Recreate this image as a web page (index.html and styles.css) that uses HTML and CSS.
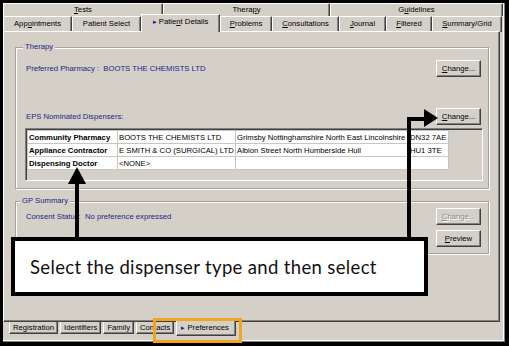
FILE: index.html
```html
<!DOCTYPE html>
<html lang="en">
<head>
    <meta charset="UTF-8">
    <title>Patient Details - Preferences</title>
    <link rel="stylesheet" href="styles.css">
</head>
<body>
    <div class="screen">
        <div class="window">
            <div class="tabs-top">
                <div class="tab-row back">
                    <div class="tab"><u>T</u>ests</div>
                    <div class="tab">Thera<u>p</u>y</div>
                    <div class="tab">G<u>u</u>idelines</div>
                </div>
                <div class="tab-row front">
                    <div class="tab">App<u>o</u>intments</div>
                    <div class="tab">Patient Select</div>
                    <div class="tab active"><span class="marker">&#9656;</span> Patie<u>n</u>t Details</div>
                    <div class="tab"><u>P</u>roblems</div>
                    <div class="tab"><u>C</u>onsultations</div>
                    <div class="tab"><u>J</u>ournal</div>
                    <div class="tab"><u>F</u>iltered</div>
                    <div class="tab"><u>S</u>ummary/Grid</div>
                </div>
            </div>

            <div class="page">
                <fieldset class="group therapy">
                    <legend>Therapy</legend>
                    <div class="field-row first">
                        <span class="label">Preferred Pharmacy :&nbsp; BOOTS THE CHEMISTS LTD</span>
                        <button class="btn"><u>C</u>hange...</button>
                    </div>
                    <div class="field-row second">
                        <span class="label">EPS Nominated Dispensers:</span>
                        <button class="btn"><u>C</u>hange...</button>
                    </div>
                    <div class="grid-box">
                        <table class="grid">
                            <colgroup>
                                <col class="c-type">
                                <col class="c-name">
                                <col class="c-addr">
                                <col class="c-post">
                            </colgroup>
                            <tr>
                                <th>Community Pharmacy</th>
                                <td>BOOTS THE CHEMISTS LTD</td>
                                <td>Grimsby Nottinghamshire North East Lincolnshire</td>
                                <td>DN32 7AE</td>
                            </tr>
                            <tr>
                                <th>Appliance Contractor</th>
                                <td>E SMITH &amp; CO (SURGICAL) LTD</td>
                                <td>Albion Street North Humberside Hull</td>
                                <td>HU1 3TE</td>
                            </tr>
                            <tr>
                                <th>Dispensing Doctor</th>
                                <td>&lt;NONE&gt;</td>
                                <td></td>
                                <td></td>
                            </tr>
                        </table>
                    </div>
                </fieldset>

                <fieldset class="group gp">
                    <legend>GP Summary</legend>
                    <div class="gp-body">
                        <span class="label">Consent Status:&nbsp; No preference expressed</span>
                        <div class="btn-col">
                            <button class="btn" disabled><u>C</u>hange...</button>
                            <button class="btn"><u>P</u>review</button>
                        </div>
                    </div>
                </fieldset>
            </div>

            <div class="tabs-bottom">
                <div class="btab">Registration</div>
                <div class="btab">Identifiers</div>
                <div class="btab">Family</div>
                <div class="btab">Contacts</div>
                <div class="btab active"><span class="marker">&#9656;</span> Preferences</div>
            </div>
        </div>

        <div class="callout">Select the dispenser type and then select</div>

        <svg class="arrows" width="509" height="346" viewBox="0 0 509 346">
            <!-- up arrow to the dispenser list -->
            <line x1="77" y1="238" x2="77" y2="182" stroke="#000" stroke-width="4"/>
            <polygon points="77,167 68,184 86,184" fill="#000"/>
            <!-- elbow arrow to the second Change button -->
            <polyline points="409,238 409,119 426,119" fill="none" stroke="#000" stroke-width="4"/>
            <polygon points="438,118 424,109 424,127" fill="#000"/>
        </svg>

        <div class="highlight"></div>
    </div>
</body>
</html>
```

FILE: styles.css
```css
body {
    margin: 0;
    font-family: "Liberation Sans", Arial, sans-serif;
    font-size: 7.7px;
    color: #000;
}
.screen {
    position: relative;
    width: 509px;
    height: 346px;
    background: #000;
    padding: 3px 4px 4px 3px;
    box-sizing: border-box;
}
.window {
    height: 100%;
    background: #d4d0c8;
    display: flex;
    flex-direction: column;
    border-right: 1px solid #808080;
    border-bottom: 1px solid #808080;
    box-shadow: inset -1px -1px 0 #fff;
    box-sizing: border-box;
}

/* top tab strip */
.tabs-top {
    height: 28px;
    flex: none;
}
.tab-row {
    display: grid;
}
.tab-row.back {
    grid-template-columns: 160px 167px 173px;
    height: 13px;
}
.tab-row.front {
    grid-template-columns: 69px 69px 79px 52px 67px 47px 46px 70px;
    height: 15px;
}
.tab {
    border-top: 1px solid #fff;
    border-left: 1px solid #fff;
    border-right: 1px solid #404040;
    box-shadow: inset -1px 0 0 #808080;
    text-align: center;
    line-height: 12px;
    white-space: nowrap;
    box-sizing: border-box;
}
.tab-row.front .tab {
    line-height: 14px;
}
.tab.active {
    position: relative;
    z-index: 1;
    margin-top: -2px;
    height: 18px;
    background: #d4d0c8;
    line-height: 13px;
}
.marker {
    color: #1010b0;
    font-size: 7px;
}

/* tab page */
.page {
    height: 291px;
    flex: none;
    margin-right: 4px;
    padding: 10px 10px 0 11px;
    border-top: 1px solid #fff;
    border-left: 1px solid #fff;
    border-right: 1px solid #404040;
    border-bottom: 1px solid #404040;
    box-shadow: inset -1px -1px 0 #808080;
    box-sizing: border-box;
}
.group {
    margin: 0;
    padding: 0 7px 7px 10px;
    border: 1px solid #a5a29b;
    box-shadow: inset 1px 1px 0 #fff, 1px 1px 0 #fff;
}
.group legend {
    margin-left: -3px;
    padding: 0 2px;
    line-height: 10px;
    color: #23238a;
    background: #d4d0c8;
}
.gp {
    margin-top: 7px;
    padding-bottom: 6px;
}
.gp legend {
    margin-left: -6px;
}
.label {
    color: #23238a;
    white-space: nowrap;
}
.field-row {
    display: flex;
    justify-content: space-between;
    align-items: center;
}
.field-row.first {
    margin-top: 8px;
}
.field-row.second {
    margin-top: 31px;
}
.btn {
    width: 45px;
    height: 17px;
    padding: 0;
    font: inherit;
    color: #000;
    background: #d4d0c8;
    border: 1px solid;
    border-color: #fff #404040 #404040 #fff;
    box-shadow: inset -1px -1px 0 #808080;
}
.btn:disabled {
    color: #8c8a85;
    text-shadow: 1px 1px 0 #fff;
}

/* dispenser list */
.grid-box {
    height: 53px;
    margin: 3px -2px 0 -1px;
    padding: 1px;
    border: 1px solid;
    border-color: #808080 #fff #fff #808080;
    box-shadow: inset 1px 1px 0 #404040;
    box-sizing: border-box;
}
.grid {
    border-collapse: collapse;
    background: #fff;
    table-layout: fixed;
    width: 421px;
}
.c-type { width: 90px; }
.c-name { width: 118px; }
.c-addr { width: 173px; }
.c-post { width: 40px; }
.grid th,
.grid td {
    height: 12px;
    padding: 0 1px;
    border: 1px solid #c8c6c0;
    text-align: left;
    white-space: nowrap;
    overflow: hidden;
    line-height: 11px;
}
.grid th {
    font-weight: bold;
}

.gp-body {
    display: flex;
    justify-content: space-between;
    margin-top: 2px;
}
.gp-body .label {
    line-height: 17px;
}
.btn-col {
    display: flex;
    flex-direction: column;
    gap: 5px;
}

/* bottom tab strip */
.tabs-bottom {
    display: flex;
    height: 12px;
    padding-left: 6px;
    flex: none;
}
.btab {
    padding: 0 3px;
    border-left: 1px solid #fff;
    border-right: 1px solid #404040;
    border-bottom: 1px solid #404040;
    box-shadow: inset -1px -1px 0 #808080;
    line-height: 11px;
    white-space: nowrap;
    margin-right: 2px;
}
.btab.active {
    position: relative;
    margin-top: -1px;
    height: 14px;
    padding: 0 6px 0 4px;
    background: #d4d0c8;
    line-height: 14px;
}

/* annotations */
.callout {
    position: absolute;
    left: 11px;
    top: 237px;
    width: 417px;
    height: 59px;
    padding-left: 15px;
    display: flex;
    align-items: center;
    background: #fff;
    border: 4px solid #000;
    box-sizing: border-box;
    font-family: Lato, "Liberation Sans", sans-serif;
    font-size: 18.5px;
    letter-spacing: 0.35px;
    color: #111;
    white-space: nowrap;
}
.arrows {
    position: absolute;
    left: 0;
    top: 0;
    pointer-events: none;
}
.highlight {
    position: absolute;
    left: 153px;
    top: 318px;
    width: 89px;
    height: 25px;
    border: 3px solid #f2a51c;
    box-sizing: border-box;
}
```
